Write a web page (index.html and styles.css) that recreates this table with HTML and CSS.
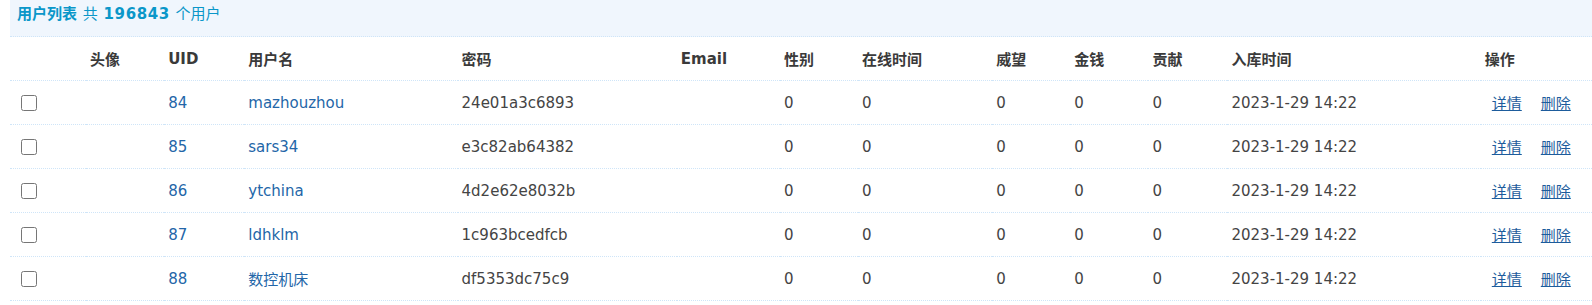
FILE: index.html
```html
<!DOCTYPE html>
<html lang="zh-CN">
<head>
<meta charset="utf-8">
<title>用户列表</title>
<link rel="stylesheet" href="styles.css">
</head>
<body>
<div class="page">
  <div class="partition"><b>用户列表</b> 共 <b class="num">196843</b> 个用户</div>
  <table class="tb">
    <colgroup>
      <col class="c-chk"><col class="c-avatar"><col class="c-uid"><col class="c-name"><col class="c-pw"><col class="c-email"><col class="c-sex"><col class="c-online"><col class="c-credit"><col class="c-money"><col class="c-contrib"><col class="c-time"><col class="c-op">
    </colgroup>
    <thead>
      <tr>
        <th></th><th>头像</th><th>UID</th><th>用户名</th><th>密码</th><th>Email</th><th>性别</th><th>在线时间</th><th>威望</th><th>金钱</th><th>贡献</th><th>入库时间</th><th>操作</th>
      </tr>
    </thead>
    <tbody>
      <tr>
        <td><input type="checkbox" class="chk"></td><td></td><td><a class="lk">84</a></td><td><a class="lk">mazhouzhou</a></td><td>24e01a3c6893</td><td></td><td>0</td><td>0</td><td>0</td><td>0</td><td>0</td><td>2023-1-29 14:22</td>
        <td><span class="ops"><a class="op">详情</a><a class="op">删除</a></span></td>
      </tr>
      <tr>
        <td><input type="checkbox" class="chk"></td><td></td><td><a class="lk">85</a></td><td><a class="lk">sars34</a></td><td>e3c82ab64382</td><td></td><td>0</td><td>0</td><td>0</td><td>0</td><td>0</td><td>2023-1-29 14:22</td>
        <td><span class="ops"><a class="op">详情</a><a class="op">删除</a></span></td>
      </tr>
      <tr>
        <td><input type="checkbox" class="chk"></td><td></td><td><a class="lk">86</a></td><td><a class="lk">ytchina</a></td><td>4d2e62e8032b</td><td></td><td>0</td><td>0</td><td>0</td><td>0</td><td>0</td><td>2023-1-29 14:22</td>
        <td><span class="ops"><a class="op">详情</a><a class="op">删除</a></span></td>
      </tr>
      <tr>
        <td><input type="checkbox" class="chk"></td><td></td><td><a class="lk">87</a></td><td><a class="lk">ldhklm</a></td><td>1c963bcedfcb</td><td></td><td>0</td><td>0</td><td>0</td><td>0</td><td>0</td><td>2023-1-29 14:22</td>
        <td><span class="ops"><a class="op">详情</a><a class="op">删除</a></span></td>
      </tr>
      <tr>
        <td><input type="checkbox" class="chk"></td><td></td><td><a class="lk">88</a></td><td><a class="lk">数控机床</a></td><td>df5353dc75c9</td><td></td><td>0</td><td>0</td><td>0</td><td>0</td><td>0</td><td>2023-1-29 14:22</td>
        <td><span class="ops"><a class="op">详情</a><a class="op">删除</a></span></td>
      </tr>
    </tbody>
  </table>
</div>
</body>
</html>
```
FILE: styles.css
```css
html, body {
  margin: 0;
  padding: 0;
  background: #fff;
}
body {
  font-family: "DejaVu Sans", Verdana, "Noto Sans CJK SC", sans-serif;
  font-size: 15px;
  color: #444;
}
.page {
  padding-left: 10px;
  width: 1582px;
}
.partition {
  height: 37px;
  box-sizing: border-box;
  padding: 0 0 0 7px;
  line-height: 28px;
  background: #f0f6fd;
  border-bottom: 1px dotted #cfe5f8;
  color: #0a97c9;
  word-spacing: 1px;
}
.partition b {
  font-weight: 700;
}
.partition .num {
  letter-spacing: 0.6px;
}
.tb {
  width: 1582px;
  border-collapse: collapse;
  table-layout: fixed;
}
.c-chk { width: 76px; }
.c-avatar { width: 78px; }
.c-uid { width: 80px; }
.c-name { width: 213px; }
.c-pw { width: 219px; }
.c-email { width: 103px; }
.c-sex { width: 78px; }
.c-online { width: 134px; }
.c-credit { width: 78px; }
.c-money { width: 78px; }
.c-contrib { width: 79px; }
.c-time { width: 253px; }
.c-op { width: 111px; }
.tb th,
.tb td {
  padding: 0 0 0 4px;
  text-align: left;
  vertical-align: middle;
  white-space: nowrap;
  border-bottom: 1px dotted #cfe5f8;
}
.tb th {
  height: 43px;
  font-weight: 700;
  color: #3a3a3a;
}
.tb td {
  height: 43px;
}
.chk {
  width: 16px;
  height: 16px;
  margin: 0 0 0 7px;
  display: block;
}
.lk {
  color: #2366a8;
  text-decoration: none;
}
.ops {
  display: inline-flex;
  gap: 19px;
  padding-left: 7px;
}
.op {
  color: #1d5c9c;
  text-decoration: underline;
}
```
